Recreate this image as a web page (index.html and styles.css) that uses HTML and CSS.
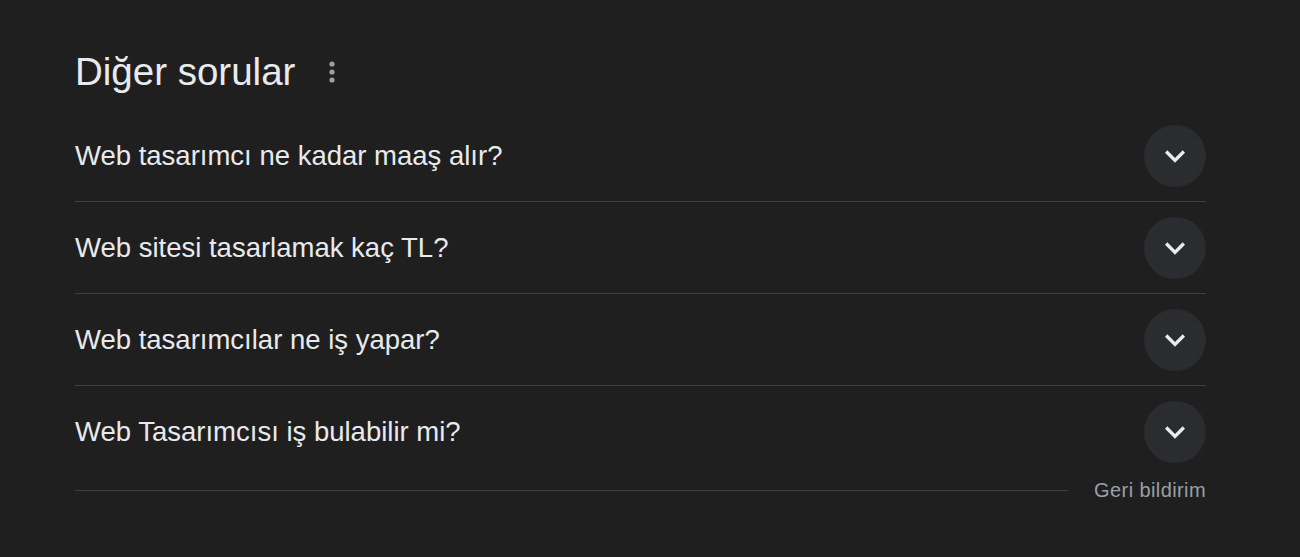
FILE: index.html
```html
<!DOCTYPE html>
<html lang="tr">
<head>
<meta charset="utf-8">
<link rel="stylesheet" href="styles.css">
</head>
<body>
<div class="panel">
  <div class="heading">
    <h2 class="title">Diğer sorular</h2>
    <svg class="menu" width="24" height="24" viewBox="0 0 24 24"><circle cx="12" cy="4" r="2.6"/><circle cx="12" cy="12" r="2.6"/><circle cx="12" cy="20" r="2.6"/></svg>
  </div>
  <div class="list">
    <div class="row">
      <span class="q">Web tasarımcı ne kadar maaş alır?</span>
      <span class="btn"><svg width="40" height="40" viewBox="0 0 24 24"><path d="M16.59 8.59L12 13.17 7.41 8.59 6 10l6 6 6-6z"/></svg></span>
    </div>
    <div class="row">
      <span class="q">Web sitesi tasarlamak kaç TL?</span>
      <span class="btn"><svg width="40" height="40" viewBox="0 0 24 24"><path d="M16.59 8.59L12 13.17 7.41 8.59 6 10l6 6 6-6z"/></svg></span>
    </div>
    <div class="row">
      <span class="q">Web tasarımcılar ne iş yapar?</span>
      <span class="btn"><svg width="40" height="40" viewBox="0 0 24 24"><path d="M16.59 8.59L12 13.17 7.41 8.59 6 10l6 6 6-6z"/></svg></span>
    </div>
    <div class="row last">
      <span class="q">Web Tasarımcısı iş bulabilir mi?</span>
      <span class="btn"><svg width="40" height="40" viewBox="0 0 24 24"><path d="M16.59 8.59L12 13.17 7.41 8.59 6 10l6 6 6-6z"/></svg></span>
    </div>
  </div>
  <div class="footer">
    <div class="rule"></div>
    <span class="feedback">Geri bildirim</span>
  </div>
</div>
</body>
</html>
```
FILE: styles.css
```css
html, body {
  margin: 0;
  padding: 0;
  background: #1f1f1f;
  height: 100%;
}
body {
  font-family: "Liberation Sans", Arial, sans-serif;
  color: #e8eaed;
}
.panel {
  width: 1131px;
  padding: 50px 0 0 75px;
}
.heading {
  display: flex;
  align-items: center;
  height: 44px;
}
.title {
  margin: 0;
  font-size: 38.5px;
  font-weight: 400;
  line-height: 44px;
  color: #e8eaed;
}
.menu {
  margin-left: 25px;
  fill: #9aa0a6;
}
.list {
  margin-top: 16px;
}
.row {
  display: flex;
  align-items: center;
  justify-content: space-between;
  height: 91px;
  border-bottom: 1px solid #3c4043;
}
.row.last {
  border-bottom: none;
}
.q {
  font-size: 27.5px;
  line-height: 32px;
}
.btn {
  width: 62px;
  height: 62px;
  border-radius: 50%;
  background: #2b2c2f;
  display: flex;
  align-items: center;
  justify-content: center;
}
.btn svg {
  fill: #e8eaed;
}
.footer {
  display: flex;
  align-items: center;
  height: 26px;
}
.rule {
  flex: 1;
  height: 1px;
  background: #3c4043;
  margin-right: 26px;
}
.feedback {
  font-size: 20px;
  letter-spacing: 0.4px;
  color: #9aa0a6;
}
```
